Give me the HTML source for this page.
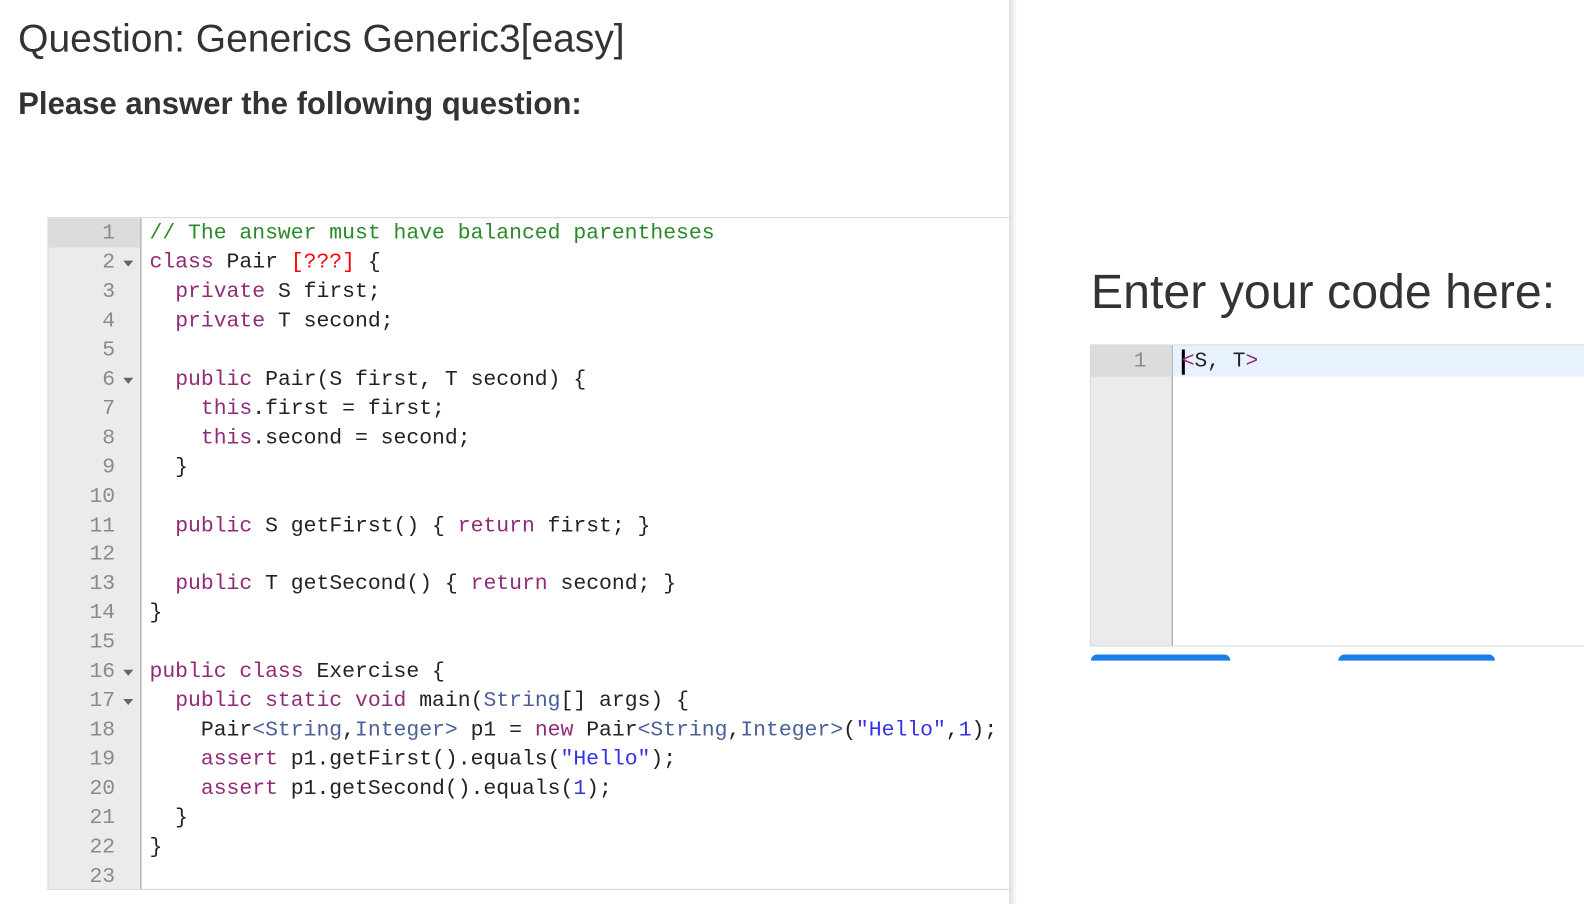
<!DOCTYPE html>
<html><head><meta charset="utf-8"><style>
body{margin:0;width:1584px;height:895px;overflow:hidden;background:#fff;font-family:"Liberation Sans",Arial,sans-serif;position:relative}
#w{position:absolute;left:0;top:0;width:1584px;height:895px;transform:scale(1.0101);transform-origin:0 0}
h1{position:absolute;left:18px;top:17px;margin:0;font-weight:normal;font-size:38.6px;color:#333}
h2{position:absolute;left:18px;top:85px;margin:0;font-weight:bold;font-size:30.8px;color:#333}
.ed{position:absolute;left:47px;top:215px;width:953px;height:664px;border:1px solid #d6d6d6;border-right:none;overflow:hidden;background:#fff}
.gut{position:absolute;left:0;top:0;width:91px;height:100%;background:#ebebeb;border-right:1px solid #999}
.code,.nums{position:absolute;top:1px;font-family:"Liberation Mono",monospace;font-size:21.2px;line-height:28.95px;white-space:pre}
.nums{left:0;width:66px;text-align:right;color:#8a8a8a}
.nums div{position:relative}
.nums .a::after{content:"";position:absolute;right:-18px;top:12px;border-left:5px solid transparent;border-right:5px solid transparent;border-top:6px solid #666}
.code{left:100px;color:#222}
.c{color:#2a8a2a}.k{color:#932a78}.r{color:#f00}.t{color:#4a5f98}.s{color:#3333e6}.n{color:#3333e6}
.sh{position:absolute;left:999px;top:0;width:8px;height:895px;background:linear-gradient(to right,#ddd,#fff)}
h3{position:absolute;left:1080px;top:262px;margin:0;font-weight:normal;font-size:47.8px;color:#333}
.ed2{position:absolute;left:1079px;top:341px;width:510px;height:297px;border:1px solid #d6d6d6;background:#fff}
.ed2 .g{position:absolute;left:0;top:0;width:80px;height:100%;background:#ebebeb;border-right:1px solid #999}
.btn{position:absolute;top:648px;height:6px;background:#1a7ee8;border-radius:6px 6px 0 0}
</style></head><body><div id="w">
<h1>Question: Generics Generic3[easy]</h1>
<h2>Please answer the following question:</h2>
<div class="ed"><div class="gut"><div style="height:29px;background:#dcdcdc"></div></div>
<div class="nums"><div>1</div><div class="a">2</div><div>3</div><div>4</div><div>5</div><div class="a">6</div><div>7</div><div>8</div><div>9</div><div>10</div><div>11</div><div>12</div><div>13</div><div>14</div><div>15</div><div class="a">16</div><div class="a">17</div><div>18</div><div>19</div><div>20</div><div>21</div><div>22</div><div>23</div></div>
<div class="code"><span class="c">// The answer must have balanced parentheses</span>
<span class="k">class</span> Pair <span class="r">[???]</span> {
  <span class="k">private</span> S first;
  <span class="k">private</span> T second;

  <span class="k">public</span> Pair(S first, T second) {
    <span class="k">this</span>.first = first;
    <span class="k">this</span>.second = second;
  }

  <span class="k">public</span> S getFirst() { <span class="k">return</span> first; }

  <span class="k">public</span> T getSecond() { <span class="k">return</span> second; }
}

<span class="k">public class</span> Exercise {
  <span class="k">public static void</span> main(<span class="t">String</span>[] args) {
    Pair<span class="t">&lt;String</span>,<span class="t">Integer&gt;</span> p1 = <span class="k">new</span> Pair<span class="t">&lt;String</span>,<span class="t">Integer&gt;</span>(<span class="s">"Hello"</span>,<span class="n">1</span>);
    <span class="k">assert</span> p1.getFirst().equals(<span class="s">"Hello"</span>);
    <span class="k">assert</span> p1.getSecond().equals(<span class="n">1</span>);
  }
}
</div></div>
<div class="sh"></div>
<h3>Enter your code here:</h3>
<div class="ed2"><div class="g"><div style="height:31px;background:#dcdcdc"></div></div>
<div style="position:absolute;left:81px;top:0;right:0;height:31px;background:#e8f2fe"></div>
<div class="nums" style="top:1px;width:55px;font-size:21px;line-height:31px">1</div>
<div style="position:absolute;left:90px;top:4px;width:3px;height:25px;background:#000"></div>
<div class="code" style="left:90px;top:1px;line-height:31px;font-size:21px"><span class="k">&lt;</span>S, T<span class="k">&gt;</span></div>
</div>
<div class="btn" style="left:1080px;width:138px"></div>
<div class="btn" style="left:1325px;width:155px"></div>
</div></body></html>
